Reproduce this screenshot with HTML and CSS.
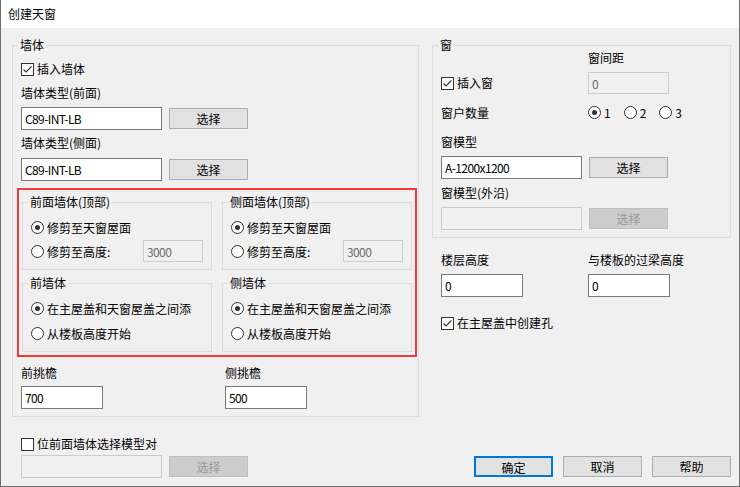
FILE: index.html
```html
<!DOCTYPE html>
<html lang="zh-CN">
<head>
  <meta charset="UTF-8">
  <title>创建天窗</title>
  <link rel="stylesheet" href="styles.css">
</head>
<body>
  <div class="dialog">
    <div class="titlebar">创建天窗</div>
    <div class="dialog-body">

      <!-- left column: wall settings -->
      <div class="col col-left">
        <fieldset class="group group-wall">
          <legend>墙体</legend>
          <div class="check wall-insert">
            <span class="box"><svg viewBox="0 0 11 11"><path d="M1.5 5.5 L4 8 L9.5 2.5"/></svg></span>插入墙体
          </div>
          <div class="caption cap-first">墙体类型(前面)</div>
          <div class="field-row row-first">
            <input class="text wide" value="C89-INT-LB">
            <button class="btn">选择</button>
          </div>
          <div class="caption cap-second">墙体类型(侧面)</div>
          <div class="field-row row-second">
            <input class="text wide" value="C89-INT-LB">
            <button class="btn">选择</button>
          </div>

          <div class="highlight">
            <fieldset class="sub sub-top">
              <legend>前面墙体(顶部)</legend>
              <div class="radio-row first"><span class="radio on"></span>修剪至天窗屋面</div>
              <div class="radio-row height-row"><span class="radio"></span>修剪至高度:<input class="text small" value="3000" disabled></div>
            </fieldset>
            <fieldset class="sub sub-top">
              <legend>侧面墙体(顶部)</legend>
              <div class="radio-row first"><span class="radio on"></span>修剪至天窗屋面</div>
              <div class="radio-row height-row"><span class="radio"></span>修剪至高度:<input class="text small" value="3000" disabled></div>
            </fieldset>
            <fieldset class="sub sub-bottom">
              <legend>前墙体</legend>
              <div class="radio-row first"><span class="radio on"></span>在主屋盖和天窗屋盖之间添</div>
              <div class="radio-row second"><span class="radio"></span>从楼板高度开始</div>
            </fieldset>
            <fieldset class="sub sub-bottom">
              <legend>侧墙体</legend>
              <div class="radio-row first"><span class="radio on"></span>在主屋盖和天窗屋盖之间添</div>
              <div class="radio-row second"><span class="radio"></span>从楼板高度开始</div>
            </fieldset>
          </div>

          <div class="pair eaves">
            <div class="caption">前挑檐</div>
            <div class="caption">侧挑檐</div>
            <input class="text num" value="700">
            <input class="text num" value="500">
          </div>
        </fieldset>

        <div class="check model-pick">
          <span class="box"></span>位前面墙体选择模型对
        </div>
        <div class="field-row row-model">
          <input class="text wide" value="" disabled>
          <button class="btn" disabled>选择</button>
        </div>
      </div>

      <!-- right column: window settings and dialog buttons -->
      <div class="col col-right">
        <fieldset class="group group-window">
          <legend>窗</legend>
          <div class="win-row r-spacing-label">
            <span class="lead"></span>
            <span class="caption">窗间距</span>
          </div>
          <div class="win-row r-insert">
            <span class="lead check"><span class="box"><svg viewBox="0 0 11 11"><path d="M1.5 5.5 L4 8 L9.5 2.5"/></svg></span>插入窗</span>
            <input class="text num" value="0" disabled>
          </div>
          <div class="win-row r-count">
            <span class="lead">窗户数量</span>
            <span class="radio-item"><span class="radio on"></span>1</span>
            <span class="radio-item"><span class="radio"></span>2</span>
            <span class="radio-item"><span class="radio"></span>3</span>
          </div>
          <div class="caption r-model-label">窗模型</div>
          <div class="field-row r-model">
            <input class="text wide" value="A-1200x1200">
            <button class="btn">选择</button>
          </div>
          <div class="caption r-edge-label">窗模型(外沿)</div>
          <div class="field-row r-edge">
            <input class="text wide" value="" disabled>
            <button class="btn" disabled>选择</button>
          </div>
        </fieldset>

        <div class="pair levels">
          <div class="caption">楼层高度</div>
          <div class="caption">与楼板的过梁高度</div>
          <input class="text num" value="0">
          <input class="text num" value="0">
        </div>

        <div class="check hole">
          <span class="box"><svg viewBox="0 0 11 11"><path d="M1.5 5.5 L4 8 L9.5 2.5"/></svg></span>在主屋盖中创建孔
        </div>

        <div class="actions">
          <button class="btn default">确定</button>
          <button class="btn">取消</button>
          <button class="btn">帮助</button>
        </div>
      </div>

    </div>
  </div>
</body>
</html>
```

FILE: styles.css
```css
html, body {
  margin: 0;
  padding: 0;
  background: #fff;
}
body {
  font-family: "Noto Sans CJK SC", "Microsoft YaHei", sans-serif;
  font-size: 12px;
  color: #000;
}
.dialog {
  width: 740px;
  height: 487px;
  box-sizing: border-box;
  border: 1px solid #6f6f6f;
  border-top: none;
  display: flex;
  flex-direction: column;
  background: #f0f0f0;
}
.titlebar {
  height: 28px;
  line-height: 28px;
  padding-left: 7px;
  background: #fff;
}
.dialog-body {
  flex: 1;
  display: flex;
  gap: 13px;
  padding: 10px 8px 8px 11px;
}
.col {
  display: flex;
  flex-direction: column;
}
.col-left {
  width: 407px;
}
.col-right {
  width: 299px;
}

/* group boxes */
fieldset {
  margin: 0;
  min-width: 0;
  border: 1px solid #dcdcdc;
}
legend {
  padding: 0 2px;
  margin-left: -3px;
  line-height: 14px;
}
.group {
  padding: 0 8px 7px;
}
.sub {
  padding: 0 8px 7px;
}
.sub-bottom {
  padding-bottom: 10px;
}

/* text and rows */
.caption {
  height: 16px;
  line-height: 16px;
  white-space: nowrap;
}
.check {
  display: flex;
  align-items: center;
  height: 16px;
  line-height: 16px;
  white-space: nowrap;
}
.box {
  width: 13px;
  height: 13px;
  box-sizing: border-box;
  border: 1px solid #333;
  background: #fff;
  margin-right: 3px;
  flex: none;
}
.box svg {
  display: block;
  width: 11px;
  height: 11px;
  fill: none;
  stroke: #333;
  stroke-width: 1.1;
}
.radio {
  width: 13px;
  height: 13px;
  box-sizing: border-box;
  border: 1px solid #333;
  border-radius: 50%;
  background: #fff;
  margin-right: 3px;
  flex: none;
  display: flex;
  align-items: center;
  justify-content: center;
}
.radio.on::after {
  content: "";
  width: 5px;
  height: 5px;
  border-radius: 50%;
  background: #333;
}
.field-row {
  display: flex;
  align-items: center;
  height: 23px;
}
.text {
  box-sizing: border-box;
  height: 23px;
  margin: 0;
  padding: 0 3px;
  border: 1px solid #7a7a7a;
  background: #fff;
  font: inherit;
  letter-spacing: -0.6px;
  color: #000;
  outline: none;
}
.text:disabled {
  background: #f0f0f0;
  border-color: #cccccc;
  color: #6d6d6d;
}
.text.wide {
  width: 141px;
}
.text.num {
  width: 82px;
}
.text.small {
  width: 60px;
  height: 22px;
  margin-left: auto;
}
.btn {
  box-sizing: border-box;
  width: 79px;
  height: 21px;
  margin: 0;
  padding: 0;
  border: 1px solid #adadad;
  background: #e1e1e1;
  font: inherit;
  line-height: 19px;
  color: #000;
}
.field-row .btn {
  margin-left: 7px;
}
.btn:disabled {
  background: #cccccc;
  border-color: #bfbfbf;
  color: #9a9a9a;
}
.btn.default {
  border: 2px solid #0078d7;
}

/* left column spacing */
.wall-insert { margin-top: 9px; }
.cap-first { margin-top: 8px; }
.row-first { margin-top: 6px; }
.cap-second { margin-top: 5px; }
.row-second { margin-top: 7px; }
.highlight {
  margin-top: 7px;
  margin-left: -4px;
  width: 400px;
  box-sizing: border-box;
  border: 2px solid #f03a3a;
  padding: 5px 3px 3px 3px;
  display: grid;
  grid-template-columns: 190px 190px;
  column-gap: 10px;
  row-gap: 6px;
}
.radio-row {
  display: flex;
  align-items: center;
  height: 16px;
  white-space: nowrap;
}
.radio-row.first { margin-top: 10px; }
.radio-row.second { margin-top: 9px; }
.radio-row.height-row {
  height: 22px;
  margin-top: 5px;
}
.pair {
  display: grid;
  row-gap: 5px;
}
.eaves {
  grid-template-columns: 204px 1fr;
  margin-top: 8px;
}
.model-pick {
  margin-top: 19px;
  padding-left: 9px;
}
.row-model {
  margin-top: 3px;
  padding-left: 9px;
}

/* right column spacing */
.win-row {
  display: flex;
  align-items: center;
  height: 16px;
  white-space: nowrap;
}
.win-row .lead {
  width: 147px;
  flex: none;
}
.r-spacing-label { margin-top: -2px; }
.r-insert {
  height: 22px;
  margin-top: 6px;
}
.r-insert .text {
  width: 81px;
  height: 22px;
}
.r-count { margin-top: 10px; }
.radio-item {
  display: flex;
  align-items: center;
  margin-right: 13px;
}
.r-model-label { margin-top: 14px; }
.r-model { margin-top: 6px; }
.r-edge-label { margin-top: 6px; }
.r-edge { margin-top: 6px; }
.levels {
  grid-template-columns: 147px 1fr;
  row-gap: 6px;
  margin-top: 14px;
  padding-left: 9px;
}
.hole {
  margin-top: 18px;
  padding-left: 9px;
}
.actions {
  margin-top: auto;
  height: 23px;
  display: flex;
  align-items: center;
  justify-content: flex-end;
  gap: 10px;
}
```
